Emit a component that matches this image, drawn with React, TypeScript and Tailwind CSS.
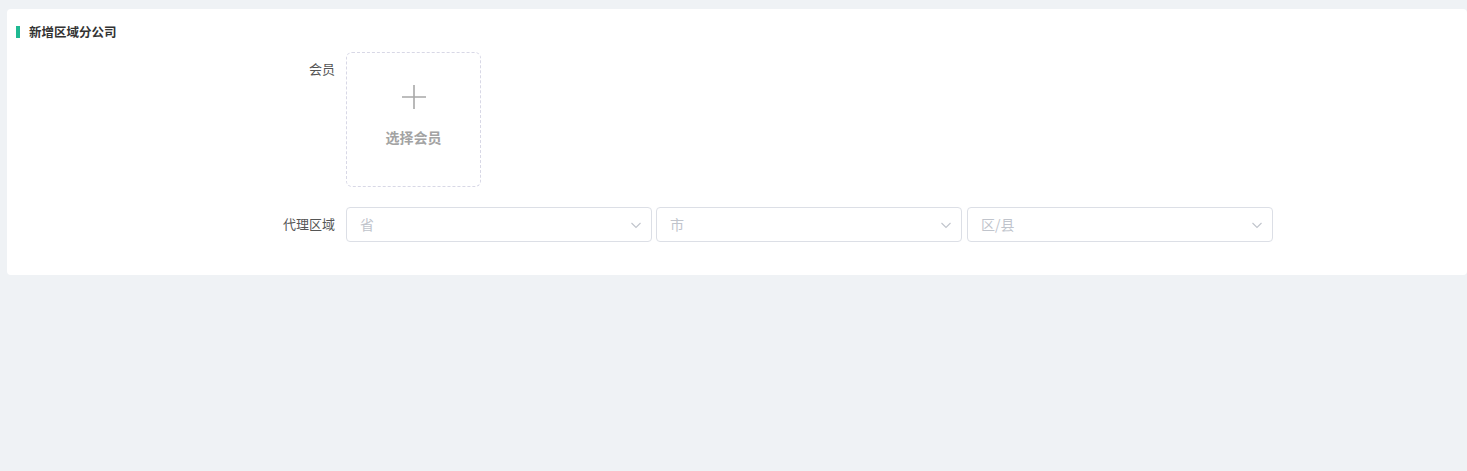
import React from "react";

const font = { fontFamily: '"Noto Sans CJK SC", "Noto Sans", sans-serif' };

function Chevron() {
  return (
    <svg width="12" height="12" viewBox="0 0 12 12" fill="none">
      <path d="M1.5 4l4.5 4.5L10.5 4" stroke="#c0c4cc" strokeWidth="1.1" />
    </svg>
  );
}

function Select({ placeholder, className }: { placeholder: string; className?: string }) {
  return (
    <div
      className={`w-[306px] h-[35px] border border-[#dcdfe6] rounded-[4px] bg-white flex items-center justify-between pl-[13px] pr-[9px] ${className ?? ""}`}
    >
      <span className="text-[14px] text-[#c0c4cc]">{placeholder}</span>
      <Chevron />
    </div>
  );
}

export default function App() {
  return (
    <div className="w-[1467px] h-[471px] bg-[#eff2f5] pt-[9px] pl-[7px]" style={font}>
      <div className="bg-white rounded-[4px] pt-[14px] pb-[33px]">
        <div className="flex items-center pl-[9px] h-[18px]">
          <div className="w-[4px] h-[12px] bg-[#1fb992]" />
          <span className="ml-[9px] text-[12.5px] font-bold text-[#333] leading-[18px]">新增区域分公司</span>
        </div>
        <div className="mt-[11px] flex">
          <div className="w-[339px] pr-[11px] text-right text-[13px] text-[#555] leading-[34px]">会员</div>
          <div className="w-[135px] h-[135px] border border-dashed border-[#d8d8e6] rounded-[6px] flex flex-col items-center">
            <svg width="26" height="26" viewBox="0 0 26 26" className="mt-[31px]">
              <path d="M13 1v24M1 13h24" stroke="#a8a8a8" strokeWidth="1.6" />
            </svg>
            <span className="mt-[18px] text-[14px] font-bold text-[#a3a3a3] leading-[18px]">选择会员</span>
          </div>
        </div>
        <div className="mt-[20px] flex">
          <div className="w-[339px] pr-[11px] text-right text-[13px] text-[#555] leading-[34px]">代理区域</div>
          <Select placeholder="省" />
          <Select placeholder="市" className="ml-[4px]" />
          <Select placeholder="区/县" className="ml-[5px]" />
        </div>
      </div>
    </div>
  );
}
